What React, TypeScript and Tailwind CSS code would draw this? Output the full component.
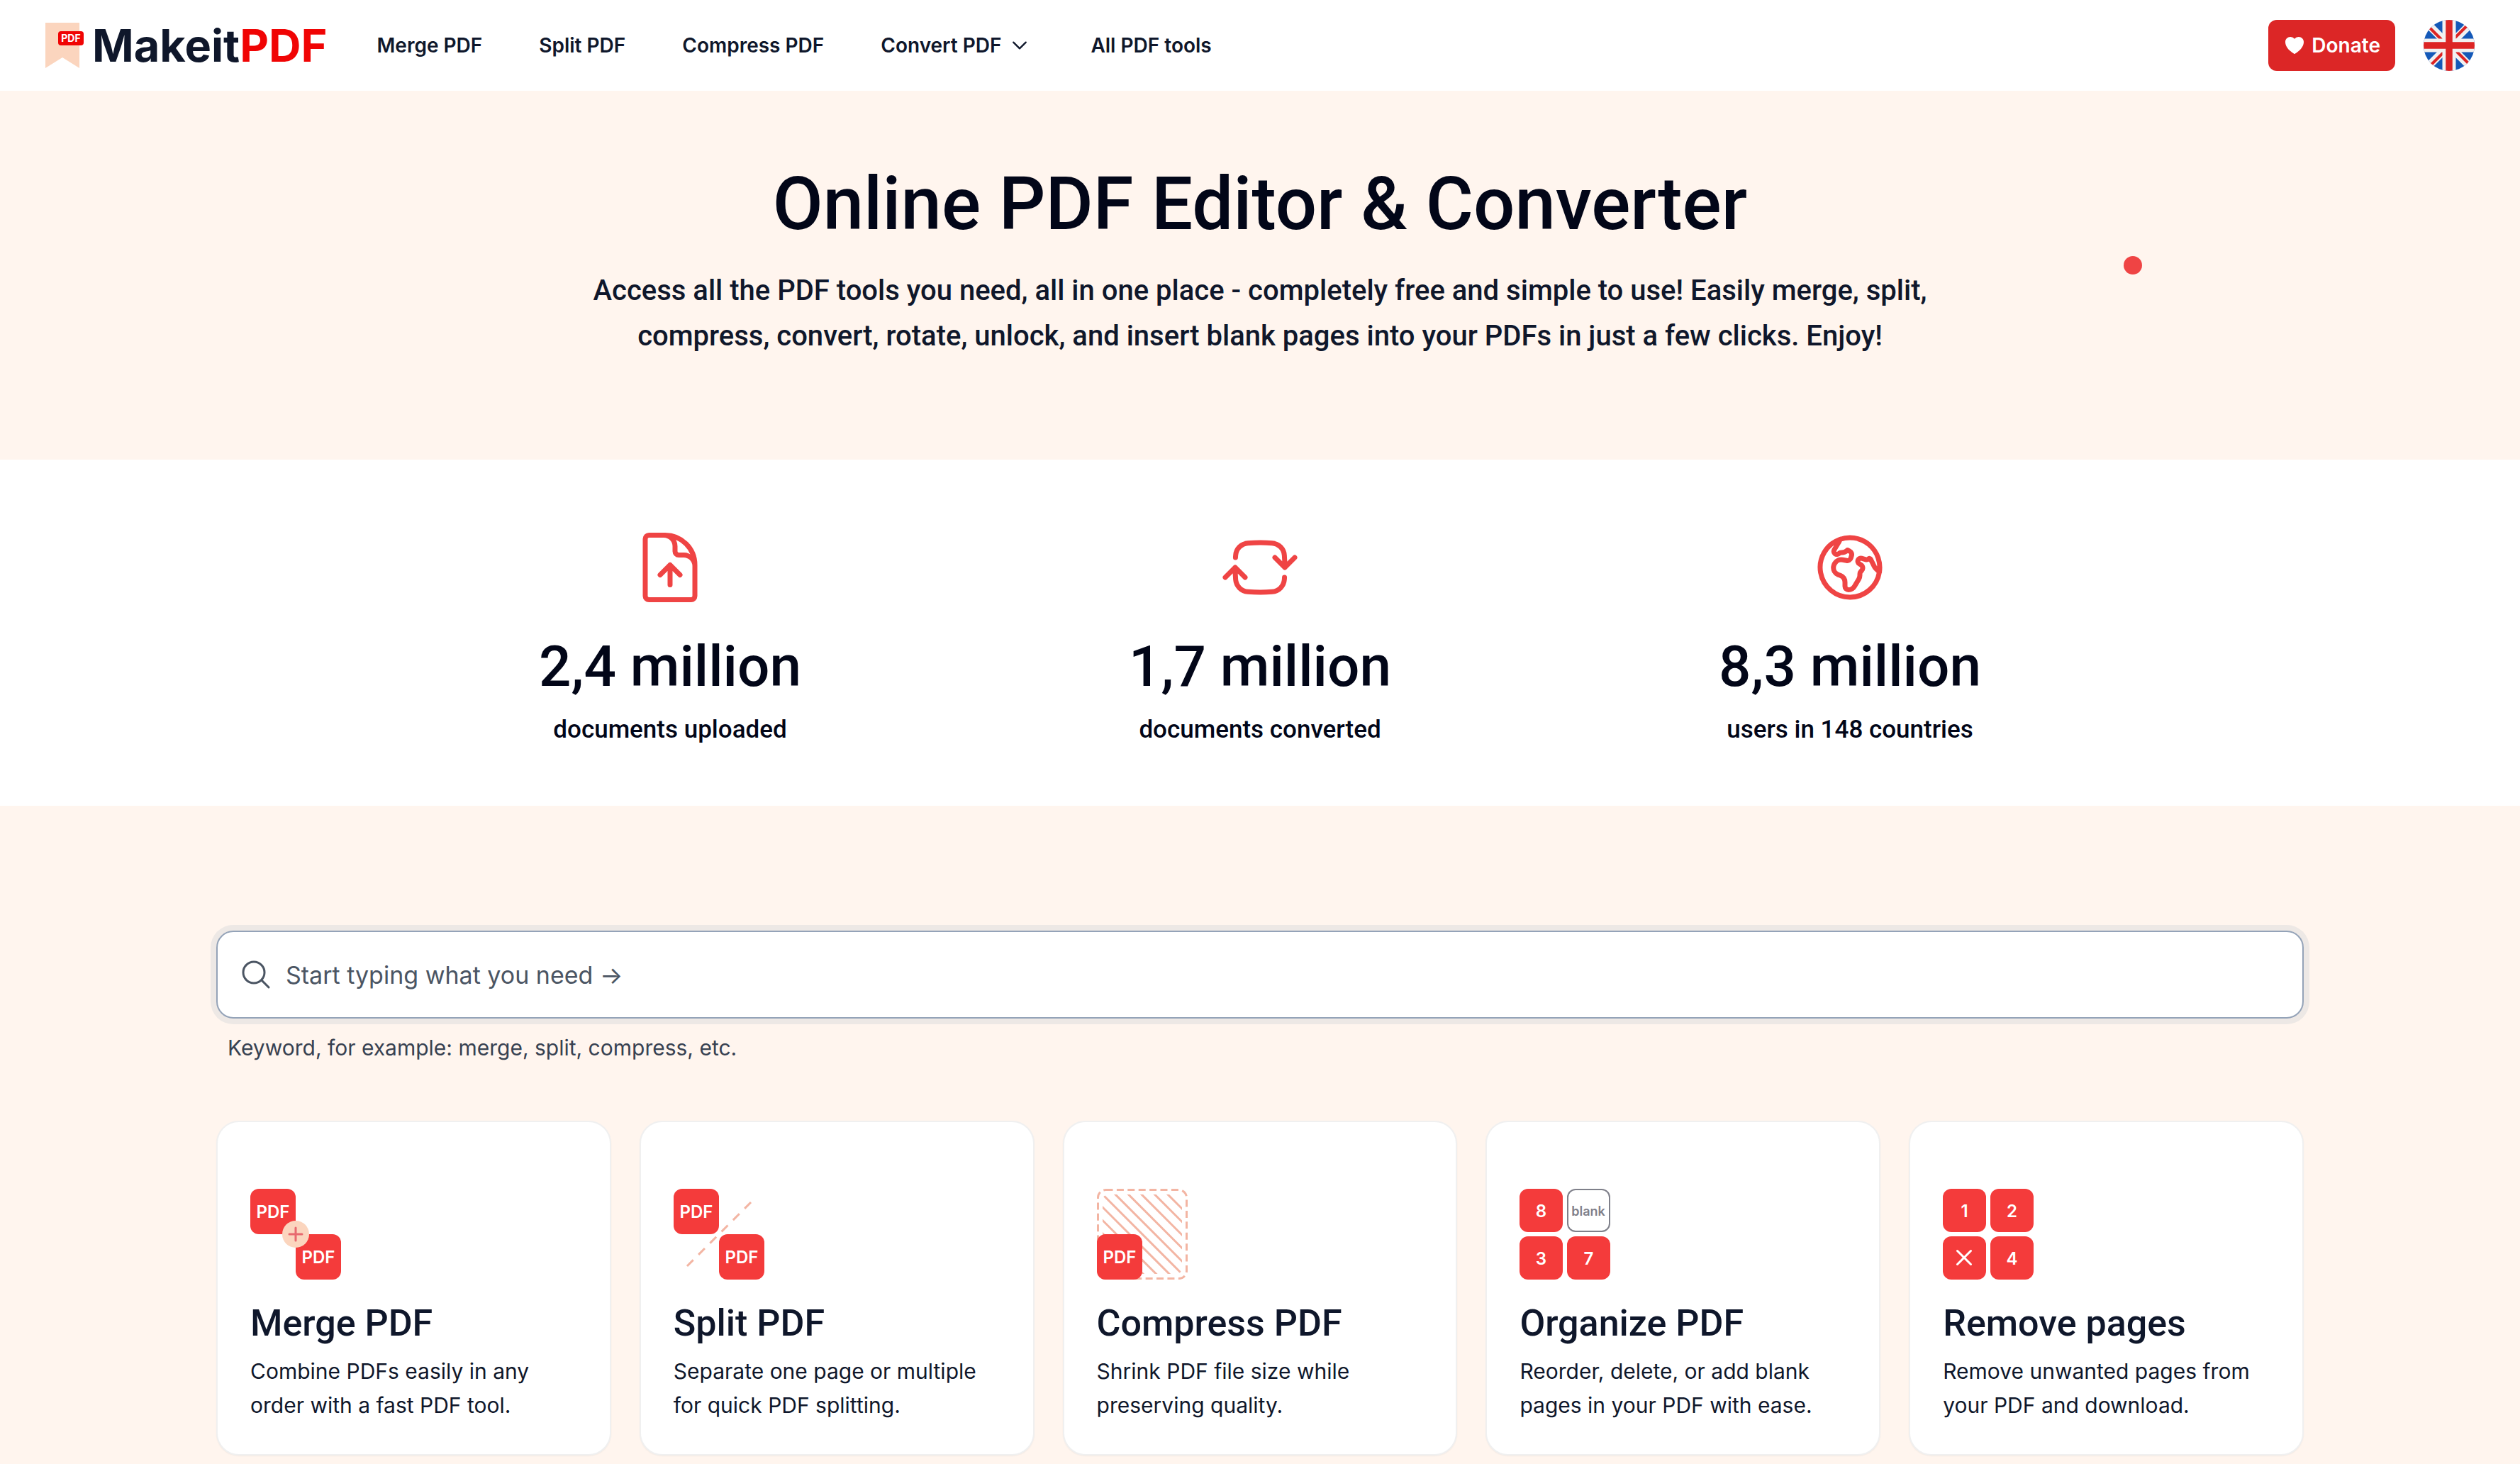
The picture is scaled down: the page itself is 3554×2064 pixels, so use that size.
import type { ReactNode } from "react";
import {
  HiHeart,
  HiOutlineArrowPathRoundedSquare,
  HiOutlineChevronDown,
  HiOutlineDocumentArrowUp,
  HiOutlineGlobeEuropeAfrica,
  HiOutlineMagnifyingGlass,
} from "react-icons/hi2";

const stats = [
  { icon: HiOutlineDocumentArrowUp, value: "2,4 million", label: "documents uploaded" },
  { icon: HiOutlineArrowPathRoundedSquare, value: "1,7 million", label: "documents converted" },
  { icon: HiOutlineGlobeEuropeAfrica, value: "8,3 million", label: "users in 148 countries" },
];

function Logo() {
  return (
    <a href="/" className="flex items-center gap-3">
      <svg aria-hidden width="54" height="64" viewBox="0 0 54 64">
        <path d="M0 0H48V64L24 49L0 64Z" fill="#fbd5be" />
        <rect x="18" y="12" width="36" height="20" rx="4" fill="#f00404" />
        <text x="36" y="27" textAnchor="middle" fontSize="14" fontWeight="700" fill="#fff">PDF</text>
      </svg>
      <span className="text-[63px] leading-[64px] font-bold text-slate-900">
        Makeit<span className="text-[#f00404]">PDF</span>
      </span>
    </a>
  );
}

function UkFlag() {
  return (
    <svg aria-hidden width="72" height="72" viewBox="0 0 72 72">
      <clipPath id="flag-clip">
        <circle cx="36" cy="36" r="36" />
      </clipPath>
      <g clipPath="url(#flag-clip)">
        <rect width="72" height="72" fill="#1459b8" />
        <path d="M0 0L72 72M72 0L0 72" stroke="#f1f1f1" strokeWidth="11" />
        <path d="M0 2.5L27 29.5M69.5 0L43 26.5M43 41L72 70M29 45L2 72" stroke="#dc2424" strokeWidth="4" />
        <path d="M36 0V72M0 36H72" stroke="#f1f1f1" strokeWidth="19" />
        <path d="M36 0V72M0 36H72" stroke="#dc2424" strokeWidth="9.5" />
      </g>
    </svg>
  );
}

// A red page tile, used by every tool icon
function Tile({ x, y, size = 64, label }: { x: number; y: number; size?: number; label?: string }) {
  return (
    <>
      <rect x={x} y={y} width={size} height={size} rx="12" fill="#f43b3b" />
      {label && (
        <text x={x + size / 2} y={y + size / 2 + 9} textAnchor="middle" fontSize="24" fontWeight="600" fill="#fff">
          {label}
        </text>
      )}
    </>
  );
}

function ToolIcon({ children }: { children: ReactNode }) {
  return (
    <svg aria-hidden width="128" height="128" viewBox="0 0 128 128" fill="none">
      {children}
    </svg>
  );
}

function MergeIcon() {
  return (
    <ToolIcon>
      <Tile x={0} y={0} label="PDF" />
      <Tile x={64} y={64} label="PDF" />
      <circle cx="64" cy="64" r="19" fill="#fbd5be" />
      <path d="M64 55V73M55 64H73" stroke="#e8696f" strokeWidth="3" strokeLinecap="round" />
    </ToolIcon>
  );
}

function SplitIcon() {
  return (
    <ToolIcon>
      <Tile x={0} y={0} label="PDF" />
      <Tile x={64} y={64} label="PDF" />
      <path d="M109 19L19 109" stroke="#f3b5a3" strokeWidth="3" strokeDasharray="12.5 10.5" />
    </ToolIcon>
  );
}

function CompressIcon() {
  return (
    <ToolIcon>
      <clipPath id="hatch-clip">
        <rect x="8" y="8" width="112" height="112" rx="8" />
      </clipPath>
      <rect x="1.5" y="1.5" width="125" height="125" rx="11" stroke="#f3b5a3" strokeWidth="3" strokeDasharray="10 5.4" />
      <path
        d="M92 0L220 128M73.5 0L201.5 128M55 0L183 128M36.5 0L164.5 128M18 0L146 128M0 0L128 128M0 18L110 128M0 36.5L91.5 128M0 55L73 128"
        stroke="#f3b5a3"
        strokeWidth="3"
        clipPath="url(#hatch-clip)"
      />
      <Tile x={0} y={64} label="PDF" />
    </ToolIcon>
  );
}

function OrganizeIcon() {
  return (
    <ToolIcon>
      <Tile x={0} y={0} size={61} label="8" />
      <rect x="68" y="1" width="59" height="59" rx="11" stroke="#7f808a" strokeWidth="2" />
      <text x="97" y="38" textAnchor="middle" fontSize="18" fontWeight="600" fill="#7f808a">blank</text>
      <Tile x={0} y={67} size={61} label="3" />
      <Tile x={67} y={67} size={61} label="7" />
    </ToolIcon>
  );
}

function RemoveIcon() {
  return (
    <ToolIcon>
      <Tile x={0} y={0} size={61} label="1" />
      <Tile x={67} y={0} size={61} label="2" />
      <Tile x={0} y={67} size={61} />
      <path d="M20.5 87.5L39.5 106.5M39.5 87.5L20.5 106.5" stroke="#fff" strokeWidth="3" strokeLinecap="round" />
      <Tile x={67} y={67} size={61} label="4" />
    </ToolIcon>
  );
}

const tools = [
  { icon: MergeIcon, title: "Merge PDF", lines: ["Combine PDFs easily in any", "order with a fast PDF tool."] },
  { icon: SplitIcon, title: "Split PDF", lines: ["Separate one page or multiple", "for quick PDF splitting."] },
  { icon: CompressIcon, title: "Compress PDF", lines: ["Shrink PDF file size while", "preserving quality."] },
  { icon: OrganizeIcon, title: "Organize PDF", lines: ["Reorder, delete, or add blank", "pages in your PDF with ease."] },
  { icon: RemoveIcon, title: "Remove pages", lines: ["Remove unwanted pages from", "your PDF and download."] },
];

export default function App() {
  return (
    <div className="min-h-screen bg-[#fff5ee] font-['Inter',sans-serif] text-slate-900">
      <header className="flex h-32 items-center bg-white px-16">
        <Logo />
        <nav className="ml-[70px] flex items-center gap-20 text-[28px] leading-[40px] font-semibold">
          <a href="/merge-pdf">Merge PDF</a>
          <a href="/split-pdf">Split PDF</a>
          <a href="/compress-pdf">Compress PDF</a>
          <button type="button" className="mr-1.5 flex items-center gap-3">
            Convert PDF
            <HiOutlineChevronDown aria-hidden className="size-7" strokeWidth={2} />
          </button>
          <a href="/tools">All PDF tools</a>
        </nav>
        <div className="ml-auto flex items-center gap-10">
          <a
            href="/donate"
            className="flex h-[72px] items-center gap-2 rounded-xl bg-[#dc2626] px-[21px] text-[28px] font-semibold text-white"
          >
            <HiHeart aria-hidden className="size-8" />
            Donate
          </a>
          <button type="button" aria-label="Language">
            <UkFlag />
          </button>
        </div>
      </header>

      <main>
        <section className="relative px-16 pt-[104px] pb-[142px] text-center font-['Roboto',sans-serif] font-medium">
          <h1 className="text-[103px] leading-[112px] text-slate-950">Online PDF Editor &amp; Converter</h1>
          <p className="mx-auto mt-[34px] max-w-[1920px] text-[40px] leading-[64px]">
            Access all the PDF tools you need, all in one place - completely free and simple to use! Easily merge,
            split, compress, convert, rotate, unlock, and insert blank pages into your PDFs in just a few clicks.
            Enjoy!
          </p>
          <span aria-hidden className="absolute top-[233px] right-[533px] size-[26px] rounded-full bg-[#ef4444]" />
        </section>

        <section className="bg-white pt-24 pb-[83px]">
          <dl className="mx-auto grid max-w-[2496px] grid-cols-3 font-['Roboto',sans-serif] font-medium text-slate-950">
            {stats.map(({ icon: Icon, value, label }) => (
              <div key={label} className="flex flex-col items-center">
                <Icon aria-hidden className="size-28 text-[#ef4444]" />
                <dd className="mt-9 text-[80px] leading-[96px]">{value}</dd>
                <dt className="mt-[17px] text-[35px] leading-[48px]">{label}</dt>
              </div>
            ))}
          </dl>
        </section>

        <section className="mx-auto max-w-[2944px] pt-44 pb-10">
          <div className="flex h-[124px] items-center gap-[18px] rounded-3xl border-2 border-[#94a3b8] bg-white px-[30px] ring-8 ring-[#ede8e5]">
            <HiOutlineMagnifyingGlass aria-hidden className="size-12 shrink-0 text-[#4b5563]" />
            <input
              id="tool-search"
              type="text"
              placeholder="Start typing what you need →"
              className="h-full w-full bg-transparent text-[34px] outline-none placeholder:text-[#4b5563]"
            />
          </div>
          <label htmlFor="tool-search" className="mt-[17px] block pl-4 text-[30px] leading-[48px] text-[#374151]">
            Keyword, for example: merge, split, compress, etc.
          </label>

          <div className="mt-[79px] grid grid-cols-5 gap-10">
            {tools.map(({ icon: Icon, title, lines }) => (
              <a
                key={title}
                href="/tools"
                className="rounded-[32px] border-2 border-[#f0f0f0] bg-white px-[46px] pt-[94px] pb-[45px] shadow-xs"
              >
                <Icon />
                <h2 className="mt-[30px] font-['Roboto',sans-serif] text-[52px] leading-[64px] font-medium">{title}</h2>
                <p className="mt-[11px] text-[30px] leading-[48px]">
                  {lines[0]}
                  <br />
                  {lines[1]}
                </p>
              </a>
            ))}
          </div>
        </section>
      </main>
    </div>
  );
}
